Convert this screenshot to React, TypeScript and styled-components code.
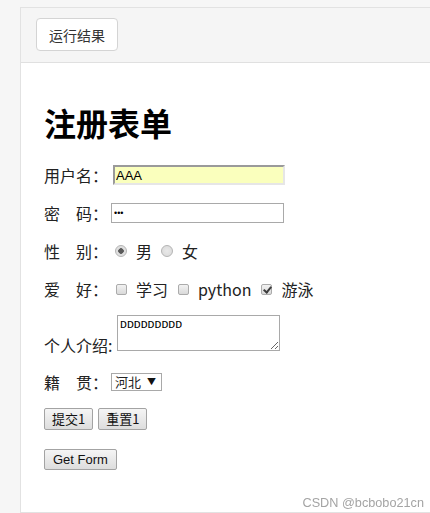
import * as React from 'react';
import styled, { createGlobalStyle } from 'styled-components';

const GlobalStyle = createGlobalStyle`
    html, body {
        margin: 0;
        padding: 0;
        background: #f6f6f6;
    }
    body {
        font-family: 'Noto Sans CJK SC', 'Noto Sans', sans-serif;
        overflow: hidden;
    }
`;

const Panel = styled.div`
    margin: 7px 0 0 20px;
    min-height: calc(100vh - 7px);
    box-sizing: border-box;
    border: 1px solid #e2e2e2;
    border-right: none;
    background: #fff;
    display: flex;
    flex-direction: column;
`;

const Toolbar = styled.div`
    background: #f5f5f5;
    border-bottom: 1px solid #e0e0e0;
    padding: 10px 15px 11px;
    display: flex;
`;

const TabButton = styled.button`
    height: 33px;
    width: 82px;
    padding: 0;
    background: #fff;
    border: 1px solid #d4d4d4;
    border-radius: 4px;
    color: #333;
    font-family: 'Noto Sans CJK SC', sans-serif;
    font-size: 14px;
`;

const Body = styled.div`
    padding: 39px 0 0 23px;
    color: #222;
    font-size: 16px;
`;

const Title = styled.h1`
    margin: 0 0 14px;
    font-size: 32px;
    line-height: 40px;
    font-weight: bold;
    color: #000;
`;

const Row = styled.div<{ $h?: number }>`
    display: flex;
    align-items: center;
    height: ${(p) => p.$h || 38}px;
`;

const AreaRow = styled.div`
    display: flex;
    align-items: flex-end;
    padding: 7px 0 8px;
`;

const Label = styled.span<{ $w?: number }>`
    width: ${(p) => p.$w || 64}px;
    line-height: 20px;
    white-space: nowrap;
    flex-shrink: 0;
`;

const TextInput = styled.input<{ $ml: number }>`
    box-sizing: border-box;
    width: 172px;
    height: 20px;
    margin: 0 0 0 ${(p) => p.$ml}px;
    padding: 0 1px;
    font-family: 'Liberation Sans', Arial, sans-serif;
    font-size: 13px;
    color: #000;
    outline: none;
`;

const FilledInput = styled(TextInput)`
    background: #faffbd;
    border: 2px solid;
    border-color: #9a9a9a #e6e6e6 #e6e6e6 #9a9a9a;
`;

const PasswordInput = styled(TextInput)`
    width: 173px;
    background: #fff;
    border: 1px solid #a9a9a9;
    padding: 0 2px;
    font-size: 9px;
`;

const Choices = styled.div`
    display: flex;
    align-items: center;
    gap: 9px;
    margin-left: 7px;
`;

const Radio = styled.input`
    appearance: none;
    margin: 0;
    width: 12px;
    height: 12px;
    box-sizing: border-box;
    border: 1px solid #b4b4b4;
    border-radius: 50%;
    background: radial-gradient(circle, #e9e9e9 0, #d8d8d8 100%);
    &:checked {
        background: radial-gradient(circle, #5a5a5a 0 2.5px, #dcdcdc 3px, #e8e8e8 100%);
    }
`;

const Check = styled.input`
    appearance: none;
    position: relative;
    margin: 0 0 0 1px;
    width: 11px;
    height: 11px;
    box-sizing: border-box;
    border: 1px solid #ababab;
    border-radius: 2px;
    background: linear-gradient(#f2f2f2, #d9d9d9);
    &:checked::after {
        content: '';
        position: absolute;
        left: 2.5px;
        top: 0px;
        width: 3px;
        height: 6px;
        border: solid #3c3c3c;
        border-width: 0 2px 2px 0;
        transform: rotate(40deg);
    }
`;

const ChoiceText = styled.span`
    line-height: 20px;
`;

const Area = styled.textarea`
    box-sizing: border-box;
    width: 163px;
    height: 36px;
    margin: 0 0 4px 0;
    padding: 2px 2px;
    border: 1px solid #a9a9a9;
    font-family: 'Liberation Mono', monospace;
    font-size: 11.5px;
    line-height: 13px;
    color: #000;
    outline: none;
`;

const SelectBox = styled.div`
    position: relative;
    display: inline-flex;
    align-items: center;
    box-sizing: border-box;
    margin-left: 3px;
    width: 51px;
    height: 18px;
    border: 1px solid #a9a9a9;
    background: #fff;
`;

const Select = styled.select`
    appearance: none;
    border: none;
    outline: none;
    background: transparent;
    width: 100%;
    height: 16px;
    padding: 0 0 0 3px;
    font-family: 'Noto Sans CJK SC', sans-serif;
    font-size: 13px;
    line-height: 16px;
    color: #222;
`;

const Arrow = styled.span`
    position: absolute;
    right: 5px;
    top: 1px;
    font-size: 9px;
    line-height: 14px;
    color: #111;
    pointer-events: none;
`;

const Buttons = styled.div`
    display: flex;
    align-items: center;
    gap: 5px;
    height: 36px;
`;

const FormButton = styled.button<{ $h?: number }>`
    height: ${(p) => p.$h || 22}px;
    padding: 0 7px;
    margin: 0;
    border: 1px solid #a3a3a3;
    border-radius: 2px;
    background: linear-gradient(#f5f5f5, #dddddd);
    color: #111;
    font-family: 'Noto Sans CJK SC', sans-serif;
    font-size: 13px;
    line-height: 18px;
`;

const LatinButton = styled(FormButton)`
    font-family: 'Liberation Sans', Arial, sans-serif;
    padding: 0 8px;
`;

const LastRow = styled.div`
    padding-top: 12px;
    display: flex;
`;

const Watermark = styled.div`
    position: fixed;
    right: 6px;
    bottom: 3px;
    font-family: 'Liberation Sans', Arial, sans-serif;
    font-size: 12.7px;
    line-height: 14px;
    color: #a4a4a4;
`;

export default function App() {
    const [gender, setGender] = React.useState('male');
    const [hobbies, setHobbies] = React.useState<Record<string, boolean>>({ study: false, python: false, swim: true });

    const toggle = (key: string) => setHobbies((prev) => ({ ...prev, [key]: !prev[key] }));

    return (
        <>
            <GlobalStyle />
            <Panel>
                <Toolbar>
                    <TabButton>运行结果</TabButton>
                </Toolbar>
                <Body>
                    <Title>注册表单</Title>
                    <form onSubmit={(e) => e.preventDefault()}>
                        <Row>
                            <Label>用户名：</Label>
                            <FilledInput $ml={5} defaultValue="AAA" />
                        </Row>
                        <Row>
                            <Label>密　码：</Label>
                            <PasswordInput $ml={3} type="password" defaultValue="AAA" />
                        </Row>
                        <Row>
                            <Label>性　别：</Label>
                            <Choices>
                                <Radio type="radio" name="sex" checked={gender === 'male'} onChange={() => setGender('male')} />
                                <ChoiceText>男</ChoiceText>
                                <Radio type="radio" name="sex" checked={gender === 'female'} onChange={() => setGender('female')} />
                                <ChoiceText>女</ChoiceText>
                            </Choices>
                        </Row>
                        <Row>
                            <Label>爱　好：</Label>
                            <Choices>
                                <Check type="checkbox" checked={hobbies.study} onChange={() => toggle('study')} />
                                <ChoiceText>学习</ChoiceText>
                                <Check type="checkbox" checked={hobbies.python} onChange={() => toggle('python')} />
                                <ChoiceText>python</ChoiceText>
                                <Check type="checkbox" checked={hobbies.swim} onChange={() => toggle('swim')} />
                                <ChoiceText>游泳</ChoiceText>
                            </Choices>
                        </Row>
                        <AreaRow>
                            <Label $w={73}>个人介绍:</Label>
                            <Area defaultValue="DDDDDDDDD" />
                        </AreaRow>
                        <Row>
                            <Label>籍　贯：</Label>
                            <SelectBox>
                                <Select defaultValue="hebei">
                                    <option value="hebei">河北</option>
                                    <option value="henan">河南</option>
                                    <option value="beijing">北京</option>
                                </Select>
                                <Arrow>▼</Arrow>
                            </SelectBox>
                        </Row>
                        <Buttons>
                            <FormButton type="submit">提交1</FormButton>
                            <FormButton type="reset">重置1</FormButton>
                        </Buttons>
                        <LastRow>
                            <LatinButton type="button" $h={21}>Get Form</LatinButton>
                        </LastRow>
                    </form>
                </Body>
            </Panel>
            <Watermark>CSDN @bcbobo21cn</Watermark>
        </>
    );
}
